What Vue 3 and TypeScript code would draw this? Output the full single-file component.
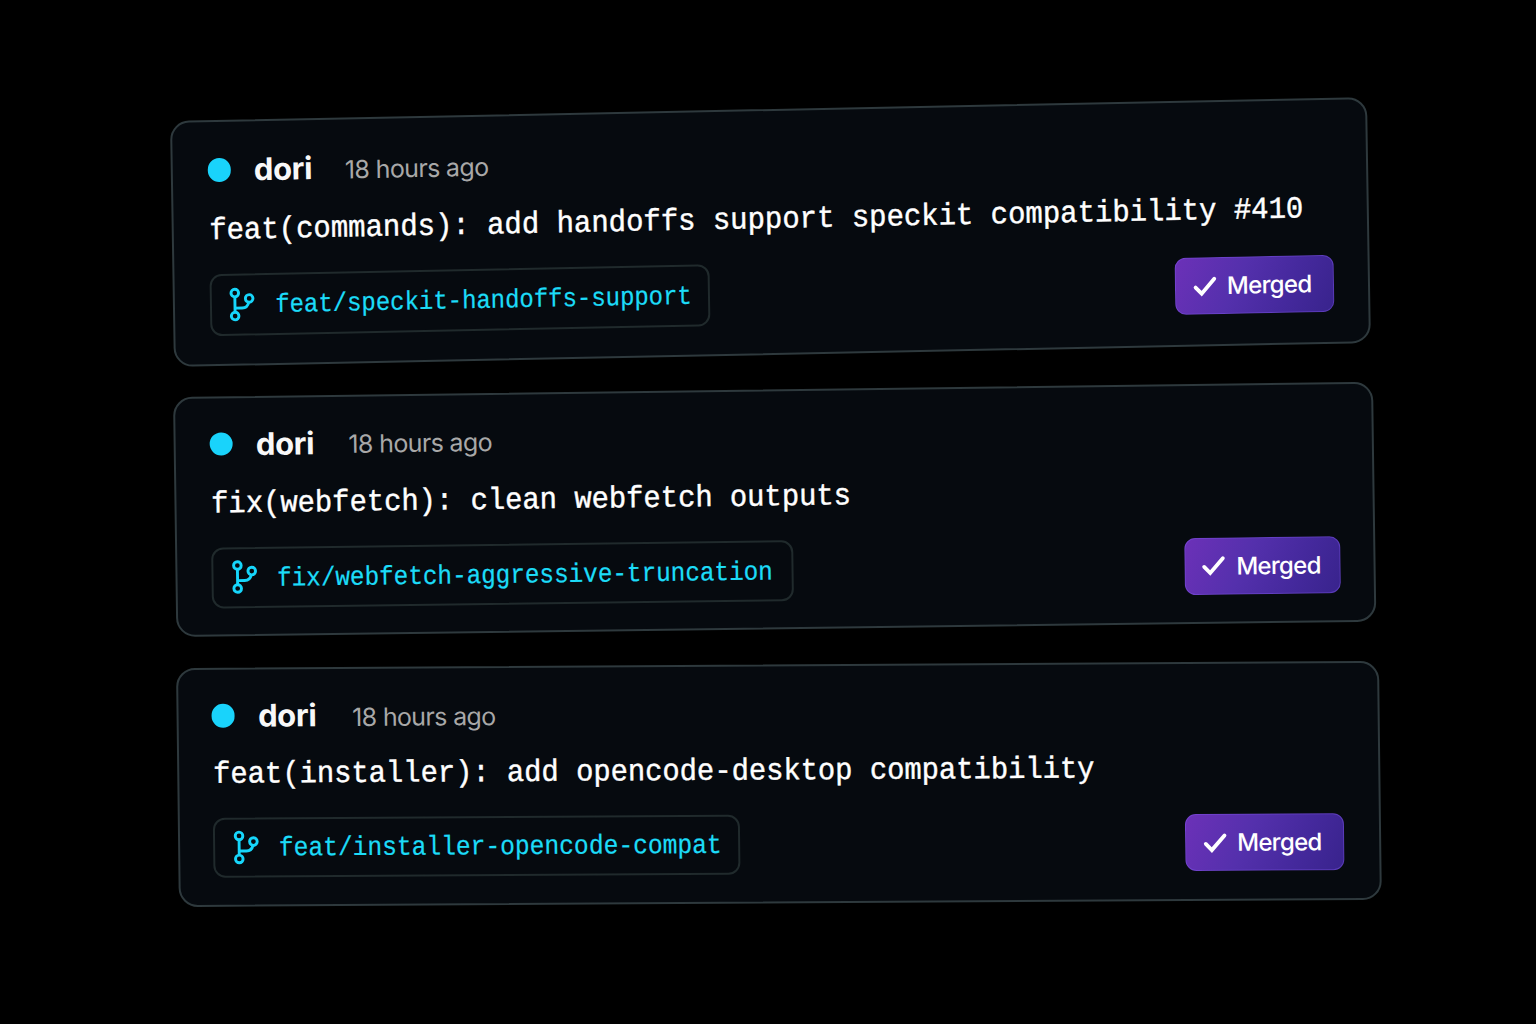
<script setup lang="ts">
interface PullRequest {
  id: string
  author: string
  time: string
  title: string
  branch: string
}

const pullRequests: PullRequest[] = [
  {
    id: 'first',
    author: 'dori',
    time: '18 hours ago',
    title: 'feat(commands): add handoffs support speckit compatibility #410',
    branch: 'feat/speckit-handoffs-support',
  },
  {
    id: 'second',
    author: 'dori',
    time: '18 hours ago',
    title: 'fix(webfetch): clean webfetch outputs',
    branch: 'fix/webfetch-aggressive-truncation',
  },
  {
    id: 'third',
    author: 'dori',
    time: '18 hours ago',
    title: 'feat(installer): add opencode-desktop compatibility',
    branch: 'feat/installer-opencode-compat',
  },
]
</script>

<template>
  <main class="stage">
    <article v-for="pr in pullRequests" :key="pr.id" class="card" :class="pr.id">
      <header class="meta">
        <span class="dot"></span>
        <span class="author">{{ pr.author }}</span>
        <span class="time">{{ pr.time }}</span>
      </header>
      <h2 class="title">{{ pr.title }}</h2>
      <div class="footer">
        <div class="branch">
          <svg class="branch-icon" width="28" height="36" viewBox="0 0 28 36" fill="none" stroke="currentColor" stroke-width="2.9">
            <circle cx="6" cy="6.3" r="3.8" />
            <circle cx="20.3" cy="12" r="3.8" />
            <circle cx="6" cy="29.3" r="3.8" />
            <path d="M6 10.1V25.5M6 21.4h7.2q5.4 0 6.6-5.6" />
          </svg>
          <span class="branch-name">{{ pr.branch }}</span>
        </div>
        <div class="badge">
          <svg class="check" width="24" height="22" viewBox="0 0 24 22" fill="none" stroke="currentColor" stroke-width="3.8" stroke-linecap="round" stroke-linejoin="miter">
            <path d="M2.6 12L8.6 18.2L21.4 3.6" />
          </svg>
          <span class="badge-label">Merged</span>
        </div>
      </div>
    </article>
  </main>
</template>

<style>
body {
  margin: 0;
  background: #000;
}
</style>

<style scoped>
.stage {
  box-sizing: border-box;
  width: 1536px;
  height: 1024px;
  padding-top: 121.3px;
  background: #000;
  overflow: hidden;
  display: flex;
  flex-direction: column;
  align-items: flex-start;
}

.card {
  box-sizing: border-box;
  flex: none;
  border: 2px solid #2e393d;
  border-radius: 19px;
  background: #060a0f;
  transform-origin: 0 0;
  color: #fff;
  font-family: Inter, "Liberation Sans", sans-serif;
}

.first {
  --title-size: 28.95px;
  --branch-size: 23.95px;
  --chip-width: 500px;
  --chip-height: 62px;
  --badge-width: 159px;
  --badge-drop: 1px;
  --author-width: 91px;
  --title-gap: 21.8px;
  width: 1196.5px;
  height: 245.6px;
  margin-left: 169.8px;
  margin-bottom: 30.6px;
  padding: 28px 33.5px 0 34.8px;
  transform: matrix(1, -0.02, 0.016, 1, 0, 0);
}

.second {
  --title-size: 28.82px;
  --branch-size: 24.3px;
  --chip-width: 582px;
  --chip-height: 60.5px;
  --badge-width: 156.5px;
  --badge-drop: 1px;
  --author-width: 92.5px;
  --title-gap: 21.4px;
  width: 1199.5px;
  height: 240.4px;
  margin-left: 172.8px;
  margin-bottom: 30.4px;
  padding: 25.8px 32.3px 0 34px;
  transform: matrix(1, -0.0127, 0.014, 1, 0, 0);
}

.third {
  --title-size: 28.8px;
  --branch-size: 24.6px;
  --chip-width: 527px;
  --chip-height: 60.5px;
  --badge-width: 159px;
  --badge-drop: 0.7px;
  --author-width: 94px;
  --title-gap: 19.9px;
  width: 1202.5px;
  height: 239px;
  margin-left: 176.3px;
  padding: 26px 34.5px 0 33.2px;
  transform: matrix(1, -0.0059, 0.012, 1, 0, 0);
}

.meta {
  display: flex;
  align-items: center;
  height: 40px;
}

.dot {
  flex: none;
  width: 23.2px;
  height: 23.2px;
  border-radius: 50%;
  background: #19d3fb;
}

.author {
  width: var(--author-width);
  margin-left: 23.1px;
  font-size: 31px;
  font-weight: 650;
  line-height: 40px;
  letter-spacing: -0.4px;
  color: #f8f8f8;
}

.time {
  padding-top: 3px;
  font-size: 25px;
  line-height: 40px;
  letter-spacing: -0.65px;
  color: #a8a8a8;
}

.title {
  margin: var(--title-gap) 0 22px;
  padding-left: 0.7px;
  font-family: "Liberation Mono", monospace;
  font-size: var(--title-size);
  font-weight: 400;
  line-height: 40px;
  white-space: pre;
  transform: scaleY(1.06);
  transform-origin: 0 70%;
  -webkit-text-stroke: 0.4px currentColor;
}

.footer {
  display: flex;
  align-items: center;
  justify-content: space-between;
}

.branch {
  box-sizing: border-box;
  width: var(--chip-width);
  height: var(--chip-height);
  display: flex;
  align-items: center;
  padding-left: 17.5px;
  border: 2px solid #202a2c;
  border-radius: 12px;
  color: #1cdcf8;
}

.branch-icon {
  flex: none;
  color: #16d6fb;
}

.branch-name {
  margin-left: 18px;
  padding-top: 3.5px;
  font-family: "Liberation Mono", monospace;
  font-size: var(--branch-size);
  line-height: 36px;
  white-space: pre;
  transform: scaleY(1.1);
  transform-origin: 0 70%;
  -webkit-text-stroke: 0.2px currentColor;
}

.badge {
  box-sizing: border-box;
  width: var(--badge-width);
  height: 57px;
  margin-top: calc(var(--badge-drop) * 2);
  display: flex;
  align-items: center;
  padding-left: 16.5px;
  border: 1px solid rgba(128, 88, 232, 0.45);
  border-radius: 11px;
  background: linear-gradient(115deg, #6c31b8 0%, #5430ac 40%, #45299d 70%, #38238c 100%) border-box;
}

.check {
  flex: none;
}

.badge-label {
  margin-left: 10.5px;
  padding-top: 1px;
  font-size: 24px;
  font-weight: 550;
  line-height: 32px;
  letter-spacing: -0.7px;
}
</style>
